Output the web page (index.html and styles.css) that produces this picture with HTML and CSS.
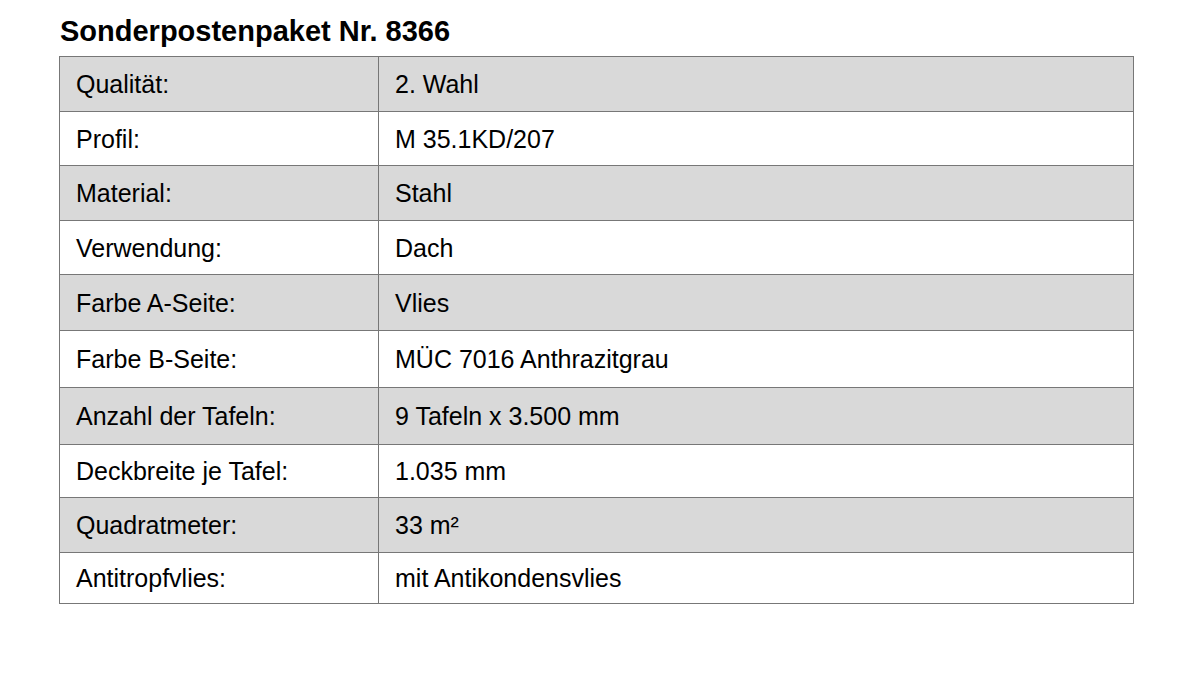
FILE: index.html
```html
<!DOCTYPE html>
<html lang="de">
<head>
<meta charset="utf-8">
<title>Sonderpostenpaket Nr. 8366</title>
<link rel="stylesheet" href="styles.css">
</head>
<body>
<div class="page">
  <h1 class="title">Sonderpostenpaket Nr. 8366</h1>
  <table class="specs">
    <tr class="shade r1"><td class="key">Qualität:</td><td class="val">2. Wahl</td></tr>
    <tr class="r2"><td class="key">Profil:</td><td class="val">M 35.1KD/207</td></tr>
    <tr class="shade r3"><td class="key">Material:</td><td class="val">Stahl</td></tr>
    <tr class="r4"><td class="key">Verwendung:</td><td class="val">Dach</td></tr>
    <tr class="shade r5"><td class="key">Farbe A-Seite:</td><td class="val">Vlies</td></tr>
    <tr class="r6"><td class="key">Farbe B-Seite:</td><td class="val">MÜC 7016 Anthrazitgrau</td></tr>
    <tr class="shade r7"><td class="key">Anzahl der Tafeln:</td><td class="val">9 Tafeln x 3.500 mm</td></tr>
    <tr class="r8"><td class="key">Deckbreite je Tafel:</td><td class="val">1.035 mm</td></tr>
    <tr class="shade r9"><td class="key">Quadratmeter:</td><td class="val">33 m²</td></tr>
    <tr class="r10"><td class="key">Antitropfvlies:</td><td class="val">mit Antikondensvlies</td></tr>
  </table>
</div>
</body>
</html>
```
FILE: styles.css
```css
html, body {
  margin: 0;
  padding: 0;
  background: #ffffff;
}
body {
  font-family: "Liberation Sans", Arial, sans-serif;
  color: #000000;
}
.page {
  padding: 13px 0 0 59px;
}
.title {
  margin: 0 0 7px 1px;
  font-size: 29px;
  font-weight: bold;
  line-height: 36px;
}
.specs {
  border-collapse: collapse;
  width: 1075px;
  font-size: 25px;
}
.specs td {
  border: 1px solid #777777;
  padding: 0 0 0 16px;
  vertical-align: middle;
  line-height: 28px;
}
.specs .key {
  width: 302px;
}
.shade td {
  background: #d9d9d9;
}
.r1 { height: 55px; }
.r2 { height: 54px; }
.r3 { height: 55px; }
.r4 { height: 54px; }
.r5 { height: 56px; }
.r6 { height: 57px; }
.r7 { height: 57px; }
.r8 { height: 53px; }
.r9 { height: 55px; }
.r10 { height: 51px; }
```
